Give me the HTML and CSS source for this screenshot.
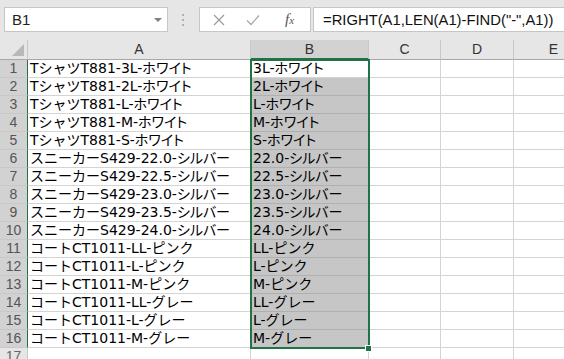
FILE: index.html
```html
<!DOCTYPE html>
<html lang="ja">
<head>
<meta charset="utf-8">
<link rel="stylesheet" href="styles.css">
</head>
<body>
<div class="app">
  <div class="bar">
    <div class="namebox"><span class="nb-text">B1</span><span class="caret"></span></div>
    <div class="dots"><i></i><i></i><i></i></div>
    <div class="fxbox">
      <svg class="ic-x" width="12" height="12" viewBox="0 0 12 12"><path d="M1 1L11 11M11 1L1 11" stroke="#9a9a9a" stroke-width="1.2" fill="none"/></svg>
      <svg class="ic-ok" width="14" height="12" viewBox="0 0 14 12"><path d="M1 6.5L5 10.5L13 1.5" stroke="#a8a8a8" stroke-width="1.3" fill="none"/></svg>
      <span class="fx"><i>f</i><span class="fx-x">x</span></span>
    </div>
    <div class="formula"><span class="ftext">=RIGHT(A1,LEN(A1)-FIND("-",A1))</span></div>
  </div>
  <div class="sheet">
    <div class="grid">
      <div class="corner"><svg width="12" height="12" viewBox="0 0 12 12"><polygon points="12,0 12,12 0,12" fill="#b8b8b8"/></svg></div>
      <div class="ch">A</div>
      <div class="ch ch-sel">B</div>
      <div class="ch">C</div>
      <div class="ch">D</div>
      <div class="ch">E</div>

      <div class="rh rh-sel">1</div><div class="c">TシャツT881-3L-<span class="p">ホワイト</span></div><div class="c cb-act">3L-<span class="p">ホワイト</span></div><div class="c"></div><div class="c"></div><div class="c"></div>
      <div class="rh rh-sel">2</div><div class="c">TシャツT881-2L-<span class="p">ホワイト</span></div><div class="c cb">2L-<span class="p">ホワイト</span></div><div class="c"></div><div class="c"></div><div class="c"></div>
      <div class="rh rh-sel">3</div><div class="c">TシャツT881-L-<span class="p">ホワイト</span></div><div class="c cb">L-<span class="p">ホワイト</span></div><div class="c"></div><div class="c"></div><div class="c"></div>
      <div class="rh rh-sel">4</div><div class="c">TシャツT881-M-<span class="p">ホワイト</span></div><div class="c cb">M-<span class="p">ホワイト</span></div><div class="c"></div><div class="c"></div><div class="c"></div>
      <div class="rh rh-sel">5</div><div class="c">TシャツT881-S-<span class="p">ホワイト</span></div><div class="c cb">S-<span class="p">ホワイト</span></div><div class="c"></div><div class="c"></div><div class="c"></div>
      <div class="rh rh-sel">6</div><div class="c">スニーカーS429-22.0-<span class="p">シルバー</span></div><div class="c cb">22.0-<span class="p">シルバー</span></div><div class="c"></div><div class="c"></div><div class="c"></div>
      <div class="rh rh-sel">7</div><div class="c">スニーカーS429-22.5-<span class="p">シルバー</span></div><div class="c cb">22.5-<span class="p">シルバー</span></div><div class="c"></div><div class="c"></div><div class="c"></div>
      <div class="rh rh-sel">8</div><div class="c">スニーカーS429-23.0-<span class="p">シルバー</span></div><div class="c cb">23.0-<span class="p">シルバー</span></div><div class="c"></div><div class="c"></div><div class="c"></div>
      <div class="rh rh-sel">9</div><div class="c">スニーカーS429-23.5-<span class="p">シルバー</span></div><div class="c cb">23.5-<span class="p">シルバー</span></div><div class="c"></div><div class="c"></div><div class="c"></div>
      <div class="rh rh-sel">10</div><div class="c">スニーカーS429-24.0-<span class="p">シルバー</span></div><div class="c cb">24.0-<span class="p">シルバー</span></div><div class="c"></div><div class="c"></div><div class="c"></div>
      <div class="rh rh-sel">11</div><div class="c">コートCT1011-LL-ピンク</div><div class="c cb">LL-ピンク</div><div class="c"></div><div class="c"></div><div class="c"></div>
      <div class="rh rh-sel">12</div><div class="c">コートCT1011-L-ピンク</div><div class="c cb">L-ピンク</div><div class="c"></div><div class="c"></div><div class="c"></div>
      <div class="rh rh-sel">13</div><div class="c">コートCT1011-M-ピンク</div><div class="c cb">M-ピンク</div><div class="c"></div><div class="c"></div><div class="c"></div>
      <div class="rh rh-sel">14</div><div class="c">コートCT1011-LL-グレー</div><div class="c cb">LL-グレー</div><div class="c"></div><div class="c"></div><div class="c"></div>
      <div class="rh rh-sel">15</div><div class="c">コートCT1011-L-グレー</div><div class="c cb">L-グレー</div><div class="c"></div><div class="c"></div><div class="c"></div>
      <div class="rh rh-sel">16</div><div class="c">コートCT1011-M-グレー</div><div class="c cb">M-グレー</div><div class="c"></div><div class="c"></div><div class="c"></div>
      <div class="rh">17</div><div class="c"></div><div class="c"></div><div class="c"></div><div class="c"></div><div class="c"></div>
    </div>
    <div class="selection"></div>
    <div class="handle"></div>
  </div>
</div>
</body>
</html>
```

FILE: styles.css
```css
html, body {
  margin: 0;
  padding: 0;
}
body {
  width: 564px;
  height: 359px;
  overflow: hidden;
  background: #fff;
  font-family: "Liberation Sans", "Noto Sans CJK JP", sans-serif;
  color: #000;
}
.p {
  font-feature-settings: "palt";
}
.app {
  width: 564px;
  height: 359px;
  overflow: hidden;
}
.bar {
  height: 40px;
  background: #e6e6e6;
  display: flex;
  align-items: flex-start;
  padding-top: 7px;
  box-sizing: border-box;
}
.namebox {
  margin-left: 4px;
  width: 164px;
  height: 25px;
  background: #fff;
  border: 1px solid #c6c6c6;
  box-sizing: border-box;
  display: flex;
  align-items: center;
  padding-left: 7px;
  padding-right: 5px;
}
.nb-text {
  font-size: 15px;
  color: #222;
  line-height: 17px;
}
.caret {
  margin-left: auto;
  width: 0;
  height: 0;
  border-left: 4px solid transparent;
  border-right: 4px solid transparent;
  border-top: 4px solid #808080;
}
.dots {
  margin-left: 14px;
  width: 3px;
  height: 25px;
  display: flex;
  flex-direction: column;
  justify-content: center;
  gap: 3px;
}
.dots i {
  display: block;
  width: 2px;
  height: 2px;
  background: #b0b0b0;
}
.fxbox {
  margin-left: 14px;
  width: 112px;
  height: 25px;
  background: #fff;
  border: 1px solid #c6c6c6;
  box-sizing: border-box;
  display: flex;
  align-items: center;
  padding-left: 13px;
}
.ic-x {
  display: block;
}
.ic-ok {
  display: block;
  margin-left: 21px;
}
.fx {
  margin-left: 25px;
  font-family: "Liberation Serif", serif;
  font-size: 15px;
  color: #555;
  line-height: 17px;
}
.fx i {
  font-style: italic;
}
.fx-x {
  font-style: italic;
  font-size: 11px;
}
.formula {
  margin-left: 2px;
  flex: 1;
  height: 25px;
  background: #fff;
  border: 1px solid #c6c6c6;
  border-right: none;
  box-sizing: border-box;
  display: flex;
  align-items: center;
  padding-left: 9px;
  white-space: nowrap;
}
.ftext {
  font-size: 14.8px;
  color: #111;
  line-height: 18px;
}
.sheet {
  position: relative;
}
.grid {
  display: grid;
  grid-template-columns: 28px 223px 118px 72px 73px 80px;
  grid-template-rows: 20px repeat(17, 18px);
}
.corner {
  background: #e6e6e6;
  border-right: 1px solid #c8c8c8;
  border-bottom: 1px solid #a8a8a8;
  box-sizing: border-box;
  display: flex;
  align-items: flex-end;
  justify-content: flex-end;
  padding: 0 3px 3px 0;
}
.corner svg {
  display: block;
}
.ch {
  background: #e6e6e6;
  border-right: 1px solid #c8c8c8;
  border-bottom: 1px solid #a8a8a8;
  box-sizing: border-box;
  font-size: 14px;
  color: #333;
  text-align: center;
  line-height: 19px;
}
.ch-sel {
  background: #d2d2d2;
  border-bottom: 2px solid #217346;
  line-height: 18px;
}
.rh {
  background: #e6e6e6;
  border-right: 1px solid #c8c8c8;
  border-bottom: 1px solid #c8c8c8;
  box-sizing: border-box;
  font-size: 14px;
  color: #666;
  text-align: center;
  line-height: 17px;
}
.rh-sel {
  background: #d2d2d2;
  border-right: 1px solid #217346;
  color: #555;
}
.c {
  border-right: 1px solid #d4d4d4;
  border-bottom: 1px solid #d4d4d4;
  box-sizing: border-box;
  font-family: "DejaVu Sans", "Noto Sans CJK JP", sans-serif;
  font-size: 14px;
  line-height: 17px;
  padding-left: 2px;
  white-space: nowrap;
  color: #000;
}
.cb {
  background: #c6c6c6;
  border-bottom-color: #b0b0b0;
}
.cb-act {
  background: #fff;
}
.selection {
  position: absolute;
  left: 250px;
  top: 19px;
  width: 120px;
  height: 290px;
  border: 2px solid #217346;
  box-sizing: border-box;
  pointer-events: none;
}
.handle {
  position: absolute;
  left: 365px;
  top: 305px;
  width: 7px;
  height: 7px;
  background: #217346;
  border: 1px solid #fff;
  box-sizing: border-box;
}
```
